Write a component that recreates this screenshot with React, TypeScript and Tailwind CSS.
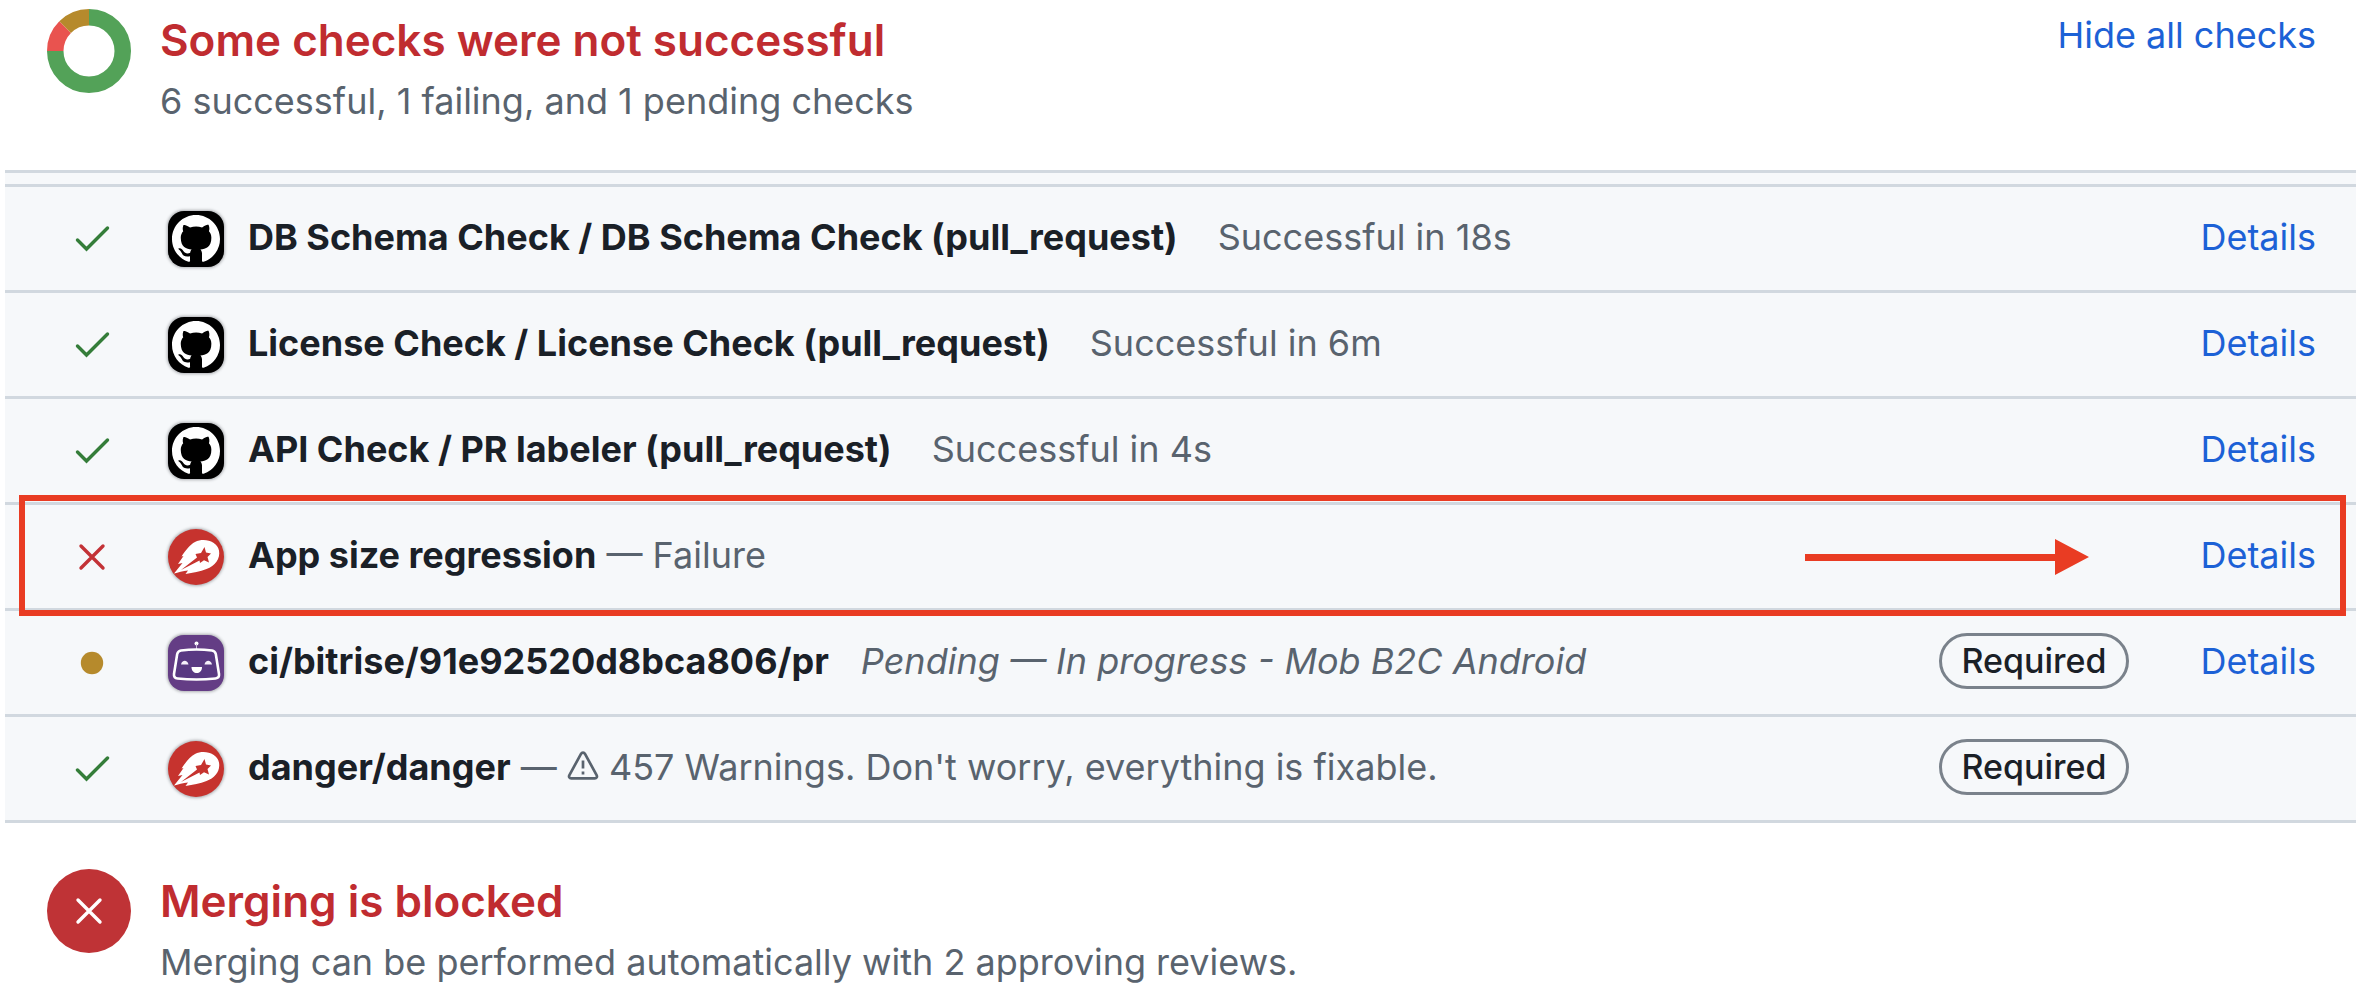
import type { ReactNode } from "react";

type Status = "success" | "failure" | "pending";
type Source = "github" | "comet" | "bitrise";

interface Check {
  name: string;
  source: Source;
  status: Status;
  summary: ReactNode;
  required?: boolean;
  details?: boolean;
  highlighted?: boolean;
}

function WarningIcon() {
  return (
    <svg viewBox="0 0 32 32" className="inline-block size-8 align-[-2px]" fill="none" stroke="currentColor" strokeWidth="2.7" aria-label="Warning">
      <path d="M14 3.8 2.4 25.2c-.9 1.6 0 3.2 1.8 3.2h23.6c1.8 0 2.7-1.6 1.8-3.2L18 3.8c-.9-1.6-3.1-1.6-4 0Z" />
      <path d="M16 10.5v8M16 21.5v3" />
    </svg>
  );
}

const checks: Check[] = [
  { name: "DB Schema Check / DB Schema Check (pull_request)", source: "github", status: "success", summary: <span className="ml-10">Successful in 18s</span>, details: true },
  { name: "License Check / License Check (pull_request)", source: "github", status: "success", summary: <span className="ml-10">Successful in 6m</span>, details: true },
  { name: "API Check / PR labeler (pull_request)", source: "github", status: "success", summary: <span className="ml-10">Successful in 4s</span>, details: true },
  { name: "App size regression", source: "comet", status: "failure", summary: <span> — Failure</span>, details: true, highlighted: true },
  { name: "ci/bitrise/91e92520d8bca806/pr", source: "bitrise", status: "pending", summary: <em className="ml-8">Pending — In progress - Mob B2C Android</em>, required: true, details: true },
  { name: "danger/danger", source: "comet", status: "success", summary: <span> — <WarningIcon /> 457 Warnings. Don't worry, everything is fixable.</span>, required: true },
];

function StatusIcon({ status }: { status: Status }) {
  return (
    <svg viewBox="0 0 40 40" className="size-10 shrink-0" fill="none" strokeWidth="3.4" strokeLinecap="round" aria-label={status}>
      {status === "success" && <path d="M5.500 21 14.500 30 35.500 9" stroke="#347d39" strokeLinejoin="miter" />}
      {status === "failure" && <path d="M9 9 31 31M31 9 9 31" stroke="#c33236" />}
      {status === "pending" && <circle cx="20" cy="20" r="11.2" fill="#b68a2c" />}
    </svg>
  );
}

function Avatar({ source }: { source: Source }) {
  if (source === "github") {
    return (
      <span className="flex size-14 shrink-0 items-center justify-center rounded-2xl bg-black shadow-[0_0_3px_1px_rgba(31,35,40,0.35)]">
        <svg viewBox="0 0 16 16" className="size-12" fill="#fff" aria-hidden="true">
          <path d="M8 0C3.58 0 0 3.58 0 8c0 3.54 2.29 6.53 5.47 7.59.4.07.55-.17.55-.38 0-.19-.01-.82-.01-1.49-2.01.37-2.53-.49-2.69-.94-.09-.23-.48-.94-.82-1.13-.28-.15-.68-.52-.01-.53.63-.01 1.08.58 1.23.82.72 1.21 1.87.87 2.33.66.07-.52.28-.87.51-1.07-1.78-.2-3.64-.89-3.64-3.95 0-.87.31-1.59.82-2.15-.08-.2-.36-1.02.08-2.12 0 0 .67-.21 2.2.82.64-.18 1.32-.27 2-.27.68 0 1.36.09 2 .27 1.53-1.04 2.2-.82 2.2-.82.44 1.1.16 1.92.08 2.12.51.56.82 1.27.82 2.15 0 3.07-1.87 3.75-3.65 3.95.29.25.54.73.54 1.48 0 1.07-.01 1.93-.01 2.2 0 .21.15.46.55.38A8.013 8.013 0 0 0 16 8c0-4.42-3.58-8-8-8Z" />
        </svg>
      </span>
    );
  }
  if (source === "bitrise") {
    return (
      <svg viewBox="0 0 56 56" className="size-14 shrink-0 rounded-2xl bg-[#643d85] shadow-[0_0_3px_1px_rgba(31,35,40,0.35)]" aria-hidden="true">
        <circle cx="28.5" cy="8.5" r="2" fill="#fff" />
        <path d="M28.500 9v6" stroke="#cbb8dc" strokeWidth="1" />
        <path d="M13 15.500Q28.500 13.500 44 15.500 47 16 47.800 19L51 39Q51.500 43 47.500 43.500 28.500 45.500 9.500 43.500 5.500 43 6 39L9.200 19Q10 16 13 15.500Z" fill="#593982" stroke="#fff" strokeWidth="2.6" />
        <path d="M13 29.500c1-5 6.500-5 7.500 0ZM36.500 29.500c1-5 6.500-5 7.500 0Z" fill="#f5effa" />
        <path d="M23.500 32h10.500c0 8-10.500 8-10.500 0Z" fill="#fff" />
      </svg>
    );
  }
  return (
    <svg viewBox="0 0 56 56" className="size-14 shrink-0 rounded-full bg-[#c6332e] shadow-[0_0_3px_1px_rgba(31,35,40,0.35)]" aria-hidden="true">
      <path d="M6 44.500 14.500 34 10 35 15.500 27 13.500 27.500C18 21 22 15.500 27 13 36 8.500 49 12 51 21.500 52.500 30 47 37 38.500 40 32 42.500 25 43.500 17.500 45L20 41.500C15 42 10 43.500 6 44.500Z" fill="#fff" />
      <path d="M36.500 18 38 23.500 43 24.500 39.500 28 41 33.500 36 31.200 32 34 31.500 31.500 13 41 29 28.500 27.500 25 33 24Z" fill="#c6332e" />
    </svg>
  );
}

function Arrow() {
  return (
    <svg viewBox="0 0 284 36" className="mr-10 h-9 w-[284px] shrink-0" fill="#e93c23" aria-hidden="true">
      <path d="M0 15H250V0L284 18 250 36V22H0Z" />
    </svg>
  );
}

function CheckRow({ check }: { check: Check }) {
  return (
    <li className="relative flex min-h-[106px] items-center border-b-3 border-[#d1d8df] pr-10 pl-[67px]">
      <StatusIcon status={check.status} />
      <span className="ml-14 flex">
        <Avatar source={check.source} />
      </span>
      <p className="ml-6 grow pb-1 text-[#59636e]">
        <strong className="font-bold text-[#1a2027]">{check.name}</strong>
        {check.summary}
      </p>
      {check.highlighted && <Arrow />}
      {check.required && (
        <span className="mb-1 flex h-14 w-[190px] shrink-0 items-center justify-center rounded-full border-3 border-[#7a828b] text-[34px] font-medium text-[#1a2027]">
          Required
        </span>
      )}
      <span className="flex w-[187px] shrink-0 justify-end pb-1">
        {check.details && <a href="#details" className="text-[#1c61d6]">Details</a>}
      </span>
      {check.highlighted && (
        <span className="pointer-events-none absolute -top-2.5 -bottom-2 left-3.5 right-2.5 z-10 border-6 border-[#e93c23]" />
      )}
    </li>
  );
}

function Donut() {
  return (
    <svg viewBox="0 0 84 84" className="size-[84px] shrink-0" fill="none" strokeWidth="16.5" aria-hidden="true">
      <path d="M42 8.250A33.750 33.750 0 1 1 8.250 42" stroke="#53a258" />
      <path d="M8.250 42A33.750 33.750 0 0 1 18.135 18.135" stroke="#e9534f" />
      <path d="M18.135 18.135A33.750 33.750 0 0 1 42 8.250" stroke="#b68a2c" />
    </svg>
  );
}

export default function App() {
  return (
    <main className="bg-white pr-2 pl-[5px] font-['Inter',sans-serif] text-[36px] leading-[54px]">
      <header className="flex items-start pt-2 pr-10 pb-[42px] pl-[42px]">
        <span className="flex pt-px">
          <Donut />
        </span>
        <div className="ml-[29px] grow pt-0.5">
          <h2 className="text-[44px] leading-[60px] font-semibold text-[#c02c30]">Some checks were not successful</h2>
          <p className="mt-1 text-[#59636e]">6 successful, 1 failing, and 1 pending checks</p>
        </div>
        <button type="button" className="shrink-0 cursor-pointer text-[#1c61d6]">Hide all checks</button>
      </header>
      <section aria-label="Checks" className="border-t-3 border-[#d1d8df] bg-[#f6f8fa] pt-[11px]">
        <ul className="border-t-3 border-[#d1d8df]">
          {checks.map((check) => (
            <CheckRow key={check.name} check={check} />
          ))}
        </ul>
      </section>
      <section className="flex items-start pt-[46px] pr-10 pl-[42px]">
        <span className="flex size-[84px] shrink-0 items-center justify-center rounded-full bg-[#bf3336]">
          <svg viewBox="0 0 28 28" className="size-7" stroke="#fff" strokeWidth="3.4" strokeLinecap="round" aria-hidden="true">
            <path d="M3 3 25 25M25 3 3 25" />
          </svg>
        </span>
        <div className="ml-[29px] grow pt-0.5">
          <h2 className="text-[44px] leading-[60px] font-semibold text-[#c02c30]">Merging is blocked</h2>
          <p className="mt-1 text-[#59636e]">Merging can be performed automatically with 2 approving reviews.</p>
        </div>
      </section>
    </main>
  );
}
